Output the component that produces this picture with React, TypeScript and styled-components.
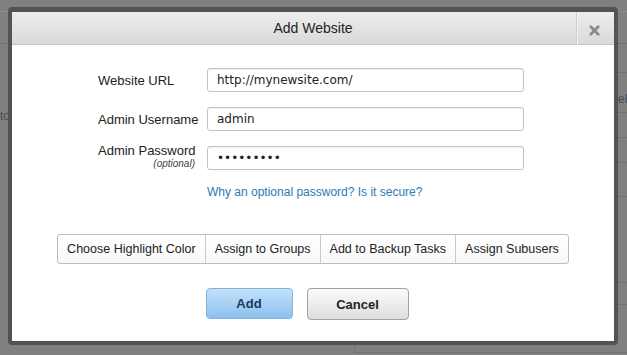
import React from "react"
import styled, { createGlobalStyle } from "styled-components"

const GlobalStyle = createGlobalStyle`
  html, body {
    margin: 0;
    padding: 0;
    background: #808080;
  }
  * {
    box-sizing: border-box;
  }
`

const rightRows = [29, 40, 25, 25, 34, 86, 22]

export default function App() {
  return (
    <>
      <GlobalStyle />
      <S.Page>
        <S.Backdrop>
          <S.TopBar />
          <S.Middle>
            <S.LeftCol>
              <S.DimText>to</S.DimText>
            </S.LeftCol>
            <S.RightCol>
              {rightRows.map((h, i) => (
                <S.DimRow key={i} style={{ height: h }}>
                  {i === 1 && <S.DimText>sel</S.DimText>}
                </S.DimRow>
              ))}
            </S.RightCol>
          </S.Middle>
          <S.BottomStrip />
        </S.Backdrop>

        <S.Overlay>
          <S.Modal>
            <S.Header>
              <S.Title>Add Website</S.Title>
              <S.Close>
                <svg width="11" height="11" viewBox="0 0 11 11">
                  <path d="M1.8 1.8 L9.2 9.2 M9.2 1.8 L1.8 9.2" stroke="#8b8b8b" strokeWidth="2.8" strokeLinecap="round" />
                </svg>
              </S.Close>
            </S.Header>

            <S.Body>
              <S.Form>
                <S.Label>Website URL</S.Label>
                <S.Input readOnly defaultValue="http://mynewsite.com/" />

                <S.Label>Admin Username</S.Label>
                <S.Input readOnly defaultValue="admin" />

                <S.StackLabel>
                  <span>Admin Password</span>
                  <S.Hint>(optional)</S.Hint>
                </S.StackLabel>
                <S.Input readOnly type="password" defaultValue="mysecret1" />

                <S.Link href="#">Why an optional password? Is it secure?</S.Link>
              </S.Form>

              <S.Group>
                <S.GroupButton>Choose Highlight Color</S.GroupButton>
                <S.GroupButton>Assign to Groups</S.GroupButton>
                <S.GroupButton>Add to Backup Tasks</S.GroupButton>
                <S.GroupButton>Assign Subusers</S.GroupButton>
              </S.Group>

              <S.Actions>
                <S.ActionButton primary>Add</S.ActionButton>
                <S.ActionButton>Cancel</S.ActionButton>
              </S.Actions>
            </S.Body>
          </S.Modal>
        </S.Overlay>
      </S.Page>
    </>
  )
}

const S = {
  Page: styled.div`
    position: relative;
    width: 627px;
    height: 355px;
    overflow: hidden;
    background: #808080;
    font-family: "Liberation Sans", Arial, sans-serif;
  `,
  Backdrop: styled.div`
    display: flex;
    flex-direction: column;
    height: 100%;
  `,
  TopBar: styled.div`
    margin-top: 11px;
    height: 33px;
    border-top: 1px solid #8b8b8b;
    border-bottom: 1px solid #717171;
  `,
  Middle: styled.div`
    flex: 1;
    display: flex;
    justify-content: space-between;
  `,
  LeftCol: styled.div`
    width: 14px;
    overflow: hidden;
    display: flex;
    align-items: flex-start;
    padding-top: 65px;
  `,
  RightCol: styled.div`
    width: 16px;
    overflow: hidden;
    display: flex;
    flex-direction: column;
  `,
  DimRow: styled.div`
    border-bottom: 1px solid #727272;
    padding: 16px 0 0 1px;
  `,
  DimText: styled.span`
    white-space: nowrap;
    font-size: 12px;
    color: #4c4c4c;
  `,
  BottomStrip: styled.div`
    margin: 0 0 2px 354px;
    height: 9px;
    border-left: 1px solid #727272;
    border-bottom: 1px solid #727272;
  `,
  Overlay: styled.div`
    position: absolute;
    inset: 0;
    display: flex;
    padding: 7px 9px 10px 8px;
  `,
  Modal: styled.div`
    flex: 1;
    display: flex;
    flex-direction: column;
    background: #fff;
    border: 4px solid #535353;
    border-top-width: 5px;
    border-radius: 4px;
    overflow: hidden;
  `,
  Header: styled.div`
    display: grid;
    grid-template-columns: 38px 1fr 38px;
    height: 33px;
    border-bottom: 1px solid #c6c6c6;
    background: linear-gradient(#ededed, #d9d9d9);
  `,
  Title: styled.div`
    grid-column: 2;
    text-align: center;
    line-height: 33px;
    font-size: 14px;
    color: #1e1e1e;
  `,
  Close: styled.div`
    display: flex;
    align-items: center;
    justify-content: center;
    padding: 3px 3px 0 0;
    border-left: 1px solid #cfcfcf;
    box-shadow: inset 1px 0 #f4f4f4;
  `,
  Body: styled.div`
    display: flex;
    flex-direction: column;
    padding-top: 23px;
  `,
  Form: styled.div`
    display: grid;
    grid-template-columns: 99px 317px;
    grid-template-rows: 24px 24px 24px auto;
    column-gap: 10px;
    row-gap: 15px;
    padding-left: 86px;
  `,
  Label: styled.div`
    align-self: center;
    text-align: left;
    white-space: nowrap;
    font-size: 13px;
    line-height: 15px;
    color: #222;
  `,
  StackLabel: styled.div`
    align-self: center;
    display: flex;
    flex-direction: column;
    margin-bottom: 4px;
    white-space: nowrap;
    font-size: 13px;
    line-height: 14px;
    color: #222;
  `,
  Hint: styled.span`
    align-self: flex-end;
    font-size: 10px;
    line-height: 11px;
    font-style: italic;
    color: #444;
    padding-right: 2px;
  `,
  Input: styled.input`
    height: 24px;
    width: 100%;
    margin: 0;
    padding: 0 9px;
    border: 1px solid #c3c3c3;
    border-radius: 3px;
    box-shadow: inset 0 1px 1px rgba(0, 0, 0, 0.06);
    font-family: "DejaVu Sans", Verdana, sans-serif;
    font-size: 12px;
    color: #222;
    background: #fff;
    outline: none;
  `,
  Link: styled.a`
    grid-column: 2;
    font-size: 12px;
    line-height: 14px;
    color: #2b7cb6;
    text-decoration: none;
  `,
  Group: styled.div`
    align-self: center;
    display: flex;
    margin-top: 35px;
    height: 30px;
    border: 1px solid #bdbdbd;
    border-radius: 3px;
    background: linear-gradient(#ffffff, #f8f8f8);
  `,
  GroupButton: styled.div`
    display: flex;
    align-items: center;
    padding: 0 9px;
    font-size: 12.5px;
    color: #222;
    & + & {
      border-left: 1px solid #c9c9c9;
    }
  `,
  Actions: styled.div`
    display: flex;
    justify-content: center;
    align-items: flex-start;
    gap: 14px;
    margin-top: 24px;
    padding-right: 12px;
  `,
  ActionButton: styled.button<{ primary?: boolean }>`
    width: ${(p) => (p.primary ? "87px" : "102px")};
    height: ${(p) => (p.primary ? "31px" : "32px")};
    margin: 0;
    padding: 0;
    border-radius: 4px;
    border: 1px solid ${(p) => (p.primary ? "#84b4dc" : "#a2a2a2")};
    background: ${(p) => (p.primary ? "linear-gradient(#c3e2fb, #8bc1ee)" : "linear-gradient(#fbfbfb, #dedede)")};
    color: ${(p) => (p.primary ? "#1b3a5f" : "#222")};
    font-family: "Liberation Sans", Arial, sans-serif;
    font-weight: bold;
    font-size: 13px;
  `,
}
